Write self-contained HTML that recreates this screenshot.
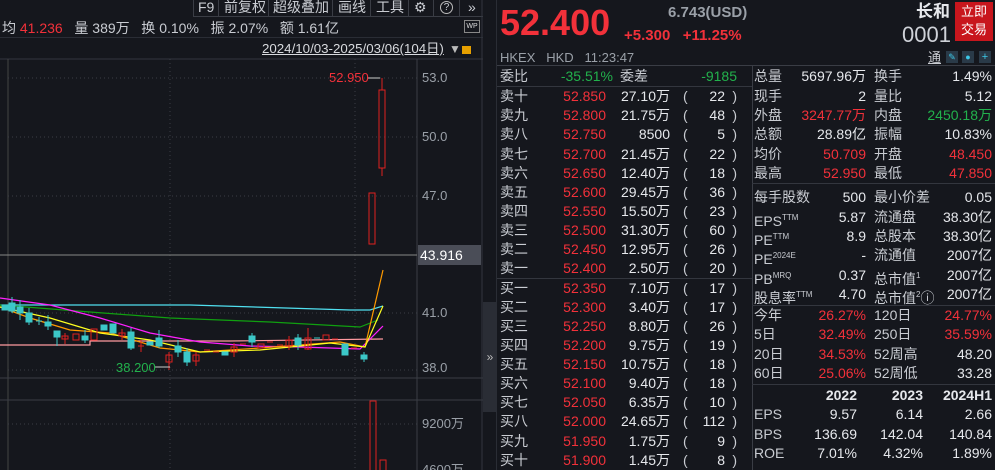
<!DOCTYPE html>
<html><head><meta charset="utf-8"><style>
*{margin:0;padding:0;box-sizing:border-box}
html,body{width:995px;height:470px;overflow:hidden}
body{background:#15171d;font-family:"Liberation Sans","Noto Sans CJK SC",sans-serif;color:#c9ccd2;font-size:14px;position:relative}
.a{position:absolute;white-space:nowrap;line-height:16px}
.r{color:#f2313a}.g{color:#22b14c}.w{color:#e6e8ec}.gy{color:#9aa0a8}
.tb{position:absolute;top:0;height:16px;line-height:15px;color:#c9ccd2;font-size:14px}
.sep{position:absolute;top:0;width:1px;height:16px;background:#3a3d45}
.hl{position:absolute;height:1px;background:#33363e}
.vl{position:absolute;width:1px;background:#33363e}
.row{position:absolute;left:497px;width:255px;height:19px;font-size:14px;line-height:19px}
.row span{position:absolute}
.st{position:absolute;left:752px;width:243px;height:19px;font-size:14px;line-height:19px}
.st span{position:absolute}
sup{font-size:8px;vertical-align:6px}
</style></head><body>
<!-- toolbar -->
<div class="sep" style="left:193px"></div><div class="tb" style="left:198px">F9</div>
<div class="sep" style="left:218px"></div><div class="tb" style="left:224px">前复权</div>
<div class="sep" style="left:268px"></div><div class="tb" style="left:273px">超级叠加</div>
<div class="sep" style="left:332px"></div><div class="tb" style="left:338px">画线</div>
<div class="sep" style="left:370px"></div><div class="tb" style="left:376px">工具</div>
<div class="sep" style="left:408px"></div><div class="tb" style="left:414px">⚙</div>
<div class="sep" style="left:433px"></div><div class="tb" style="left:440px;width:13px;height:13px;border:1px solid #bbb;border-radius:50%;font-size:10px;line-height:11px;text-align:center;top:1px">?</div>
<div class="sep" style="left:459px"></div><div class="tb" style="left:468px">»</div>
<div class="hl" style="left:193px;top:16px;width:290px;background:#3a3d45"></div>
<div class="a" style="left:2px;top:20px;font-size:14px">均 <span class="r">41.236</span>&nbsp;&nbsp; 量 389万&nbsp;&nbsp; 换 0.10%&nbsp;&nbsp; 振 2.07%&nbsp;&nbsp; 额 1.61亿</div>
<div class="a" style="left:464px;top:20px;width:16px;height:13px;border:1px solid #888;font-size:7px;line-height:11px;text-align:center;color:#ddd">WP</div>
<div class="hl" style="left:0;top:37px;width:483px;background:#2a2d35"></div>
<div class="a" style="left:262px;top:41px;font-size:13.3px;text-decoration:underline;color:#d8dade">2024/10/03-2025/03/06(104日)</div>
<div class="a" style="left:449px;top:41px;color:#bbb;font-size:12px">▼</div>
<div class="a" style="left:462px;top:46px;width:9px;height:8px;background:#e6a000"></div>
<!-- chart -->
<svg class="a" style="left:0;top:0" width="483" height="470">
<line x1="0" y1="59" x2="483" y2="59" stroke="#33363e"/>
<line x1="8" y1="59" x2="8" y2="470" stroke="#444"/>
<line x1="170" y1="59" x2="170" y2="470" stroke="#3a3d45" stroke-dasharray="1,3"/>
<line x1="355" y1="59" x2="355" y2="470" stroke="#3a3d45" stroke-dasharray="1,3"/>
<line x1="417" y1="59" x2="417" y2="470" stroke="#3a3d45"/>
<g stroke="#3a3d45" stroke-dasharray="1,3">
<line x1="8" y1="78" x2="417" y2="78"/><line x1="8" y1="137" x2="417" y2="137"/><line x1="8" y1="196" x2="417" y2="196"/><line x1="8" y1="313" x2="417" y2="313"/><line x1="8" y1="370" x2="417" y2="370"/><line x1="8" y1="424" x2="417" y2="424"/></g>
<line x1="0" y1="255" x2="417" y2="255" stroke="#888"/>
<line x1="0" y1="378" x2="483" y2="378" stroke="#3a3d45"/>
<line x1="0" y1="400" x2="483" y2="400" stroke="#3a3d45"/>
<line x1="482" y1="0" x2="482" y2="470" stroke="#33363e"/>
<g fill="none" stroke-width="1.2">
<polyline stroke="#ff9aa0" points="0,345 90,345 90,341 230,341 383,339"/>
<polyline stroke="#50e0f0" points="0,305 190,305 350,310 370,310 383,306"/>
<polyline stroke="#10a010" points="0,305 90,312 170,318 270,322 360,327 378,320"/>
<polyline stroke="#ff20ff" points="0,298 50,305 100,318 150,333 200,342 250,346 300,347 360,349 383,326"/>
<polyline stroke="#ff9a00" points="0,307 30,318 70,330 110,333 160,348 200,352 260,348 340,342 365,347 383,270"/>
<polyline stroke="#ffff20" points="0,307 50,318 100,333 150,340 200,352 260,350 330,343 365,347 383,306"/>
</g>
<g fill="#3cc8c8" stroke="#3cc8c8">
<rect x="2" y="305" width="6" height="5"/><rect x="9" y="303" width="6" height="8"/><line x1="12" y1="297" x2="12" y2="313"/>
<rect x="17" y="307" width="6" height="6"/><line x1="20" y1="300" x2="20" y2="320"/>
<rect x="26" y="313" width="6" height="9"/><line x1="29" y1="308" x2="29" y2="325"/>
<line x1="36" y1="321" x2="42" y2="321"/><line x1="39" y1="317" x2="39" y2="325"/>
<rect x="45" y="322" width="6" height="4"/><line x1="48" y1="315" x2="48" y2="330"/>
<rect x="54" y="331" width="6" height="6"/><line x1="57" y1="331" x2="57" y2="346"/>
<rect x="82" y="336" width="6" height="4"/><line x1="85" y1="330" x2="85" y2="343"/>
<rect x="101" y="325" width="6" height="5"/><rect x="110" y="324" width="6" height="9"/>
<rect x="128" y="332" width="6" height="16"/><line x1="131" y1="328" x2="131" y2="350"/>
<rect x="147" y="342" width="6" height="3"/>
<rect x="156" y="338" width="6" height="8"/><line x1="159" y1="330" x2="159" y2="348"/>
<rect x="175" y="346" width="6" height="6"/><line x1="178" y1="340" x2="178" y2="357"/>
<rect x="184" y="352" width="6" height="10"/><line x1="187" y1="348" x2="187" y2="366"/>
<rect x="222" y="352" width="6" height="3"/>
<rect x="249" y="336" width="6" height="6"/><line x1="252" y1="333" x2="252" y2="347"/>
<rect x="295" y="338" width="6" height="7"/><line x1="298" y1="334" x2="298" y2="350"/>
<line x1="314" y1="338" x2="320" y2="338"/>
<rect x="342" y="344" width="6" height="11"/>
<rect x="361" y="355" width="6" height="4"/><line x1="364" y1="352" x2="364" y2="362"/>
</g>
<g fill="none" stroke="#e02020">
<rect x="62" y="336" width="6" height="3"/><line x1="65" y1="333" x2="65" y2="344"/>
<rect x="73" y="334" width="6" height="6"/><rect x="91" y="329" width="6" height="11"/>
<rect x="119" y="333" width="6" height="3"/><line x1="122" y1="329" x2="122" y2="340"/>
<line x1="138" y1="346" x2="144" y2="346"/><line x1="141" y1="340" x2="141" y2="352"/>
<rect x="166" y="355" width="6" height="7"/><line x1="169" y1="352" x2="169" y2="370"/>
<rect x="193" y="355" width="6" height="6"/><line x1="196" y1="352" x2="196" y2="366"/>
<line x1="204" y1="350" x2="210" y2="350"/><line x1="213" y1="352" x2="219" y2="352"/>
<rect x="231" y="347" width="6" height="5"/><line x1="234" y1="343" x2="234" y2="357"/>
<line x1="240" y1="344" x2="246" y2="344"/><rect x="258" y="344" width="6" height="4"/>
<line x1="267" y1="342" x2="273" y2="342"/><line x1="277" y1="345" x2="283" y2="345"/>
<rect x="286" y="340" width="6" height="6"/><line x1="289" y1="336" x2="289" y2="350"/>
<rect x="305" y="338" width="6" height="11"/><line x1="308" y1="328" x2="308" y2="350"/>
<rect x="323" y="335" width="6" height="5"/><line x1="332" y1="339" x2="338" y2="339"/>
<line x1="351" y1="348" x2="357" y2="348"/>
<rect x="369" y="193" width="6" height="51"/>
<rect x="379" y="90" width="6" height="78"/><line x1="382" y1="78" x2="382" y2="90"/><line x1="382" y1="168" x2="382" y2="176"/>
<rect x="370" y="401" width="6" height="70"/><rect x="380" y="460" width="6" height="12"/>
</g>
<line x1="367" y1="78" x2="380" y2="78" stroke="#ccc"/>
<line x1="155" y1="367" x2="170" y2="367" stroke="#ccc"/>
</svg>
<div class="a r" style="left:329px;top:70px;font-size:13px">52.950</div>
<div class="a g" style="left:116px;top:360px;font-size:13px">38.200</div>
<div class="a gy" style="left:422px;top:70px;font-size:13px">53.0</div>
<div class="a gy" style="left:422px;top:129px;font-size:13px">50.0</div>
<div class="a gy" style="left:422px;top:188px;font-size:13px">47.0</div>
<div class="a gy" style="left:422px;top:305px;font-size:13px">41.0</div>
<div class="a gy" style="left:422px;top:360px;font-size:13px">38.0</div>
<div class="a gy" style="left:422px;top:416px;font-size:13px">9200万</div>
<div class="a gy" style="left:422px;top:462px;font-size:13px">4600万</div>
<div class="a" style="left:418px;top:245px;width:63px;height:20px;background:#4a4d57;color:#fff;font-size:14px;line-height:20px;padding-left:2px">43.916</div>
<div class="a" style="left:483px;top:302px;width:14px;height:110px;background:#2a2d35;color:#bbb;font-size:12px;line-height:110px;text-align:center">»</div>
<div class="vl" style="left:496px;top:0;height:470px;background:#2a2d35"></div>
<!-- header right -->
<div class="a r" style="left:500px;top:5px;font-size:36px;line-height:36px;font-weight:bold">52.400</div>
<div class="a gy" style="left:668px;top:5px;font-size:15px;font-weight:bold">6.743(USD)</div>
<div class="a r" style="left:624px;top:28px;font-size:15px;font-weight:bold">+5.300&nbsp;&nbsp; +11.25%</div>
<div class="a w" style="left:916px;top:4px;font-size:17px;font-weight:bold">长和</div>
<div class="a" style="left:902px;top:24px;font-size:22px;line-height:22px;color:#cfd2d8">0001</div>
<div class="a" style="left:955px;top:2px;width:38px;height:39px;background:#c8161d;color:#fff;font-size:13px;line-height:18px;text-align:center;padding-top:1px">立即<br>交易</div>
<div class="a gy" style="left:500px;top:50px;font-size:13px">HKEX&nbsp;&nbsp; HKD&nbsp;&nbsp; 11:23:47</div>
<div class="a" style="left:928px;top:50px;font-size:13px;text-decoration:underline">通</div>
<div class="a" style="left:946px;top:51px;width:12px;height:12px;background:#2a3a48;color:#3cc8e8;font-size:9px;text-align:center;line-height:12px">✎</div>
<div class="a" style="left:962px;top:51px;width:12px;height:12px;background:#2a3a48;color:#3cc8e8;font-size:9px;text-align:center;line-height:12px">●</div>
<div class="a" style="left:979px;top:51px;width:12px;height:12px;background:#2a3a48;color:#3cc8e8;font-size:11px;text-align:center;line-height:12px">+</div>
<div class="hl" style="left:497px;top:65px;width:498px;background:#3a3d45"></div>
<div class="vl" style="left:752px;top:66px;height:404px;background:#3a3d45"></div>
<div class="hl" style="left:497px;top:86px;width:255px"></div>
<div class="hl" style="left:497px;top:278px;width:255px"></div>
<div class="hl" style="left:752px;top:183px;width:243px"></div>
<div class="hl" style="left:752px;top:305px;width:243px"></div>
<div class="hl" style="left:752px;top:384px;width:243px"></div>
<div class="row" style="top:67px"><span style="left:3px">委比</span><span class="g" style="right:139px">-35.51%</span><span style="left:123px">委差</span><span class="g" style="right:15px">-9185</span></div>
<div class="row" style="top:87px"><span style="left:3px">卖十</span><span class="r" style="right:146px">52.850</span><span class="w" style="right:82px">27.10万</span><span style="left:186px">(</span><span class="w" style="right:27px">22</span><span style="right:15px">)</span></div>
<div class="row" style="top:106px"><span style="left:3px">卖九</span><span class="r" style="right:146px">52.800</span><span class="w" style="right:82px">21.75万</span><span style="left:186px">(</span><span class="w" style="right:27px">48</span><span style="right:15px">)</span></div>
<div class="row" style="top:125px"><span style="left:3px">卖八</span><span class="r" style="right:146px">52.750</span><span class="w" style="right:82px">8500</span><span style="left:186px">(</span><span class="w" style="right:27px">5</span><span style="right:15px">)</span></div>
<div class="row" style="top:145px"><span style="left:3px">卖七</span><span class="r" style="right:146px">52.700</span><span class="w" style="right:82px">21.45万</span><span style="left:186px">(</span><span class="w" style="right:27px">22</span><span style="right:15px">)</span></div>
<div class="row" style="top:164px"><span style="left:3px">卖六</span><span class="r" style="right:146px">52.650</span><span class="w" style="right:82px">12.40万</span><span style="left:186px">(</span><span class="w" style="right:27px">18</span><span style="right:15px">)</span></div>
<div class="row" style="top:183px"><span style="left:3px">卖五</span><span class="r" style="right:146px">52.600</span><span class="w" style="right:82px">29.45万</span><span style="left:186px">(</span><span class="w" style="right:27px">36</span><span style="right:15px">)</span></div>
<div class="row" style="top:202px"><span style="left:3px">卖四</span><span class="r" style="right:146px">52.550</span><span class="w" style="right:82px">15.50万</span><span style="left:186px">(</span><span class="w" style="right:27px">23</span><span style="right:15px">)</span></div>
<div class="row" style="top:221px"><span style="left:3px">卖三</span><span class="r" style="right:146px">52.500</span><span class="w" style="right:82px">31.30万</span><span style="left:186px">(</span><span class="w" style="right:27px">60</span><span style="right:15px">)</span></div>
<div class="row" style="top:240px"><span style="left:3px">卖二</span><span class="r" style="right:146px">52.450</span><span class="w" style="right:82px">12.95万</span><span style="left:186px">(</span><span class="w" style="right:27px">26</span><span style="right:15px">)</span></div>
<div class="row" style="top:259px"><span style="left:3px">卖一</span><span class="r" style="right:146px">52.400</span><span class="w" style="right:82px">2.50万</span><span style="left:186px">(</span><span class="w" style="right:27px">20</span><span style="right:15px">)</span></div>
<div class="row" style="top:279px"><span style="left:3px">买一</span><span class="r" style="right:146px">52.350</span><span class="w" style="right:82px">7.10万</span><span style="left:186px">(</span><span class="w" style="right:27px">17</span><span style="right:15px">)</span></div>
<div class="row" style="top:298px"><span style="left:3px">买二</span><span class="r" style="right:146px">52.300</span><span class="w" style="right:82px">3.40万</span><span style="left:186px">(</span><span class="w" style="right:27px">17</span><span style="right:15px">)</span></div>
<div class="row" style="top:317px"><span style="left:3px">买三</span><span class="r" style="right:146px">52.250</span><span class="w" style="right:82px">8.80万</span><span style="left:186px">(</span><span class="w" style="right:27px">26</span><span style="right:15px">)</span></div>
<div class="row" style="top:336px"><span style="left:3px">买四</span><span class="r" style="right:146px">52.200</span><span class="w" style="right:82px">9.75万</span><span style="left:186px">(</span><span class="w" style="right:27px">19</span><span style="right:15px">)</span></div>
<div class="row" style="top:355px"><span style="left:3px">买五</span><span class="r" style="right:146px">52.150</span><span class="w" style="right:82px">10.75万</span><span style="left:186px">(</span><span class="w" style="right:27px">18</span><span style="right:15px">)</span></div>
<div class="row" style="top:374px"><span style="left:3px">买六</span><span class="r" style="right:146px">52.100</span><span class="w" style="right:82px">9.40万</span><span style="left:186px">(</span><span class="w" style="right:27px">18</span><span style="right:15px">)</span></div>
<div class="row" style="top:393px"><span style="left:3px">买七</span><span class="r" style="right:146px">52.050</span><span class="w" style="right:82px">6.35万</span><span style="left:186px">(</span><span class="w" style="right:27px">10</span><span style="right:15px">)</span></div>
<div class="row" style="top:412px"><span style="left:3px">买八</span><span class="r" style="right:146px">52.000</span><span class="w" style="right:82px">24.65万</span><span style="left:186px">(</span><span class="w" style="right:27px">112</span><span style="right:15px">)</span></div>
<div class="row" style="top:432px"><span style="left:3px">买九</span><span class="r" style="right:146px">51.950</span><span class="w" style="right:82px">1.75万</span><span style="left:186px">(</span><span class="w" style="right:27px">9</span><span style="right:15px">)</span></div>
<div class="row" style="top:451px"><span style="left:3px">买十</span><span class="r" style="right:146px">51.900</span><span class="w" style="right:82px">1.45万</span><span style="left:186px">(</span><span class="w" style="right:27px">8</span><span style="right:15px">)</span></div>
<!-- stats -->
<div class="st" style="top:67px"><span style="left:2px">总量</span><span class="w" style="right:129px">5697.96万</span><span style="left:122px">换手</span><span class="w" style="right:3px">1.49%</span></div>
<div class="st" style="top:87px"><span style="left:2px">现手</span><span class="w" style="right:129px">2</span><span style="left:122px">量比</span><span class="w" style="right:3px">5.12</span></div>
<div class="st" style="top:106px"><span style="left:2px">外盘</span><span class="r" style="right:129px">3247.77万</span><span style="left:122px">内盘</span><span class="g" style="right:3px">2450.18万</span></div>
<div class="st" style="top:125px"><span style="left:2px">总额</span><span class="w" style="right:129px">28.89亿</span><span style="left:122px">振幅</span><span class="w" style="right:3px">10.83%</span></div>
<div class="st" style="top:145px"><span style="left:2px">均价</span><span class="r" style="right:129px">50.709</span><span style="left:122px">开盘</span><span class="r" style="right:3px">48.450</span></div>
<div class="st" style="top:164px"><span style="left:2px">最高</span><span class="r" style="right:129px">52.950</span><span style="left:122px">最低</span><span class="r" style="right:3px">47.850</span></div>
<div class="st" style="top:188px"><span style="left:2px">每手股数</span><span class="w" style="right:129px">500</span><span style="left:122px">最小价差</span><span class="w" style="right:3px">0.05</span></div>
<div class="st" style="top:208px"><span style="left:2px">EPS<sup>TTM</sup></span><span class="w" style="right:129px">5.87</span><span style="left:122px">流通盘</span><span class="w" style="right:3px">38.30亿</span></div>
<div class="st" style="top:227px"><span style="left:2px">PE<sup>TTM</sup></span><span class="w" style="right:129px">8.9</span><span style="left:122px">总股本</span><span class="w" style="right:3px">38.30亿</span></div>
<div class="st" style="top:246px"><span style="left:2px">PE<sup>2024E</sup></span><span class="w" style="right:129px">-</span><span style="left:122px">流通值</span><span class="w" style="right:3px">2007亿</span></div>
<div class="st" style="top:266px"><span style="left:2px">PB<sup>MRQ</sup></span><span class="w" style="right:129px">0.37</span><span style="left:122px">总市值<sup>1</sup></span><span class="w" style="right:3px">2007亿</span></div>
<div class="st" style="top:285px"><span style="left:2px">股息率<sup>TTM</sup></span><span class="w" style="right:129px">4.70</span><span style="left:122px">总市值<sup>2</sup>ⓘ</span><span class="w" style="right:3px">2007亿</span></div>
<div class="st" style="top:306px"><span style="left:2px">今年</span><span class="r" style="right:129px">26.27%</span><span style="left:122px">120日</span><span class="r" style="right:3px">24.77%</span></div>
<div class="st" style="top:325px"><span style="left:2px">5日</span><span class="r" style="right:129px">32.49%</span><span style="left:122px">250日</span><span class="r" style="right:3px">35.59%</span></div>
<div class="st" style="top:345px"><span style="left:2px">20日</span><span class="r" style="right:129px">34.53%</span><span style="left:122px">52周高</span><span class="w" style="right:3px">48.20</span></div>
<div class="st" style="top:364px"><span style="left:2px">60日</span><span class="r" style="right:129px">25.06%</span><span style="left:122px">52周低</span><span class="w" style="right:3px">33.28</span></div>
<div class="st" style="top:386px;font-weight:bold"><span class="w" style="right:138px">2022</span><span class="w" style="right:72px">2023</span><span class="w" style="right:3px">2024H1</span></div>
<div class="st" style="top:405px"><span style="left:2px">EPS</span><span class="w" style="right:138px">9.57</span><span class="w" style="right:72px">6.14</span><span class="w" style="right:3px">2.66</span></div>
<div class="st" style="top:425px"><span style="left:2px">BPS</span><span class="w" style="right:138px">136.69</span><span class="w" style="right:72px">142.04</span><span class="w" style="right:3px">140.84</span></div>
<div class="st" style="top:444px"><span style="left:2px">ROE</span><span class="w" style="right:138px">7.01%</span><span class="w" style="right:72px">4.32%</span><span class="w" style="right:3px">1.89%</span></div>
</body></html>
